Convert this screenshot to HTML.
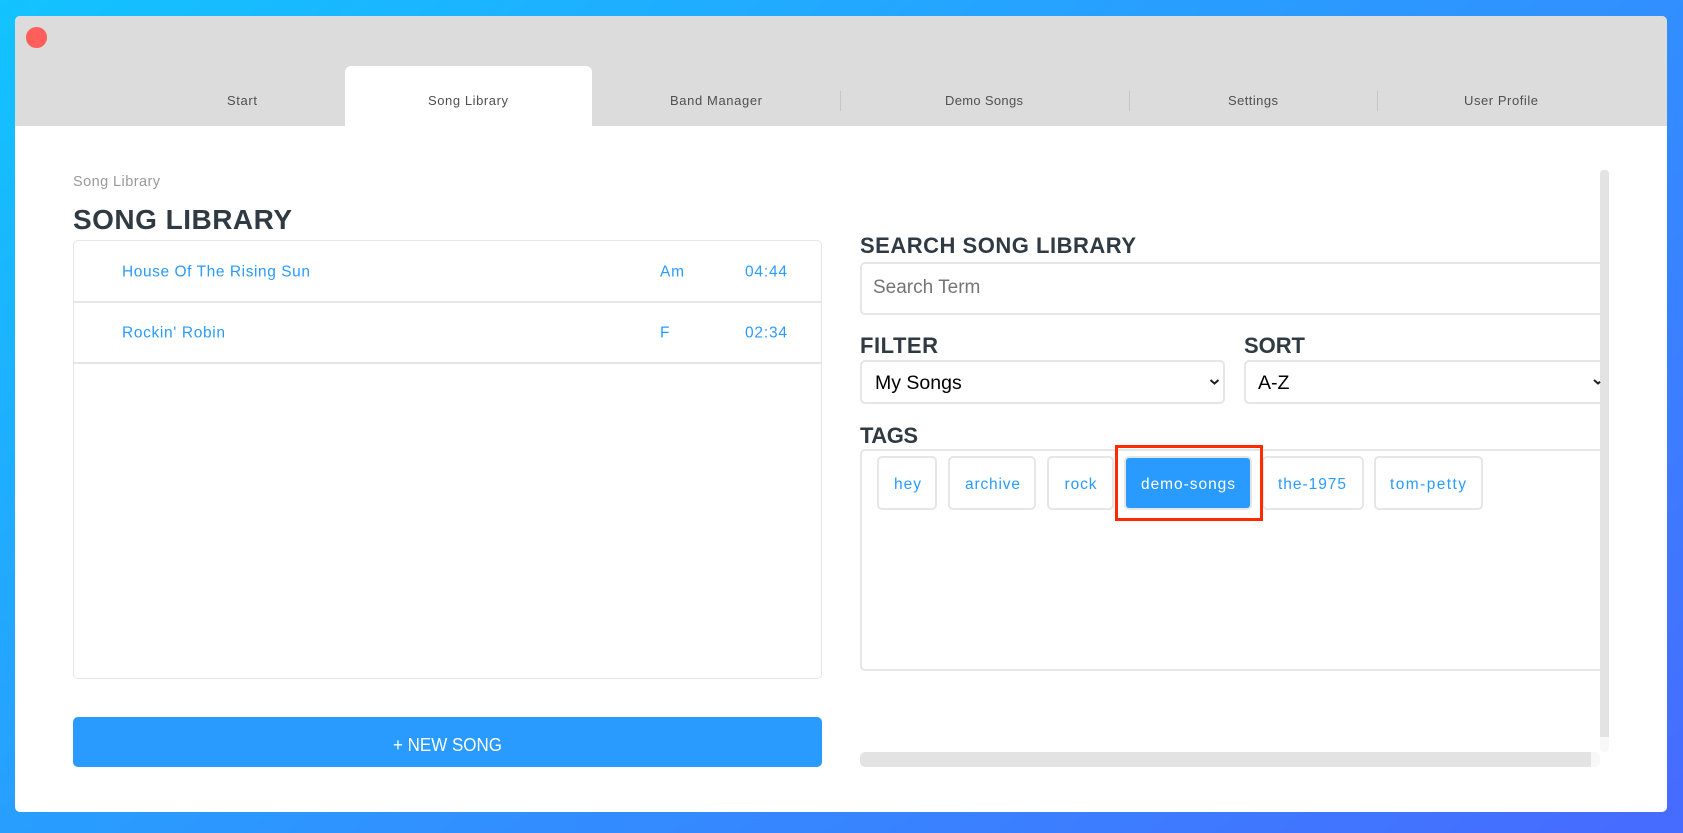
<!DOCTYPE html>
<html lang="en"><head><meta charset="utf-8"><title>Song Library</title>
<style>
html,body{margin:0;padding:0;width:1683px;height:833px;overflow:hidden}
body{position:relative;background:linear-gradient(145deg,#12c3ff 0%,#476aff 100%);font-family:"Liberation Sans",sans-serif}
.a{position:absolute;box-sizing:border-box}
#win{left:15px;top:16px;width:1652px;height:796px;background:#fff;border-radius:5px;overflow:hidden}
#bar{left:15px;top:16px;width:1652px;height:110px;background:#dcdcdc;border-radius:5px 5px 0 0}
#close{left:26px;top:27px;width:20.5px;height:20.5px;border-radius:50%;background:#ff5f5a}
#tab{left:345px;top:66px;width:247px;height:60px;background:#fff;border-radius:6px 6px 0 0}
.sep{top:91px;width:1px;height:20px;background:#c6c6c6}
.b{border:2px solid #e6e6e6;border-radius:5px;background:#fff}
#list{left:73px;top:240px;width:749px;height:439px;border:1px solid #e6e6e6;border-radius:5px}
.div{left:74px;width:747px;height:2px;background:#e6e6e6}
#new{left:73px;top:717px;width:749px;height:50px;background:#299bff;border-radius:5px}
#clip{left:850px;top:240px;width:750px;height:460px;overflow:hidden}
#clip input,#clip select{position:absolute;box-sizing:border-box;border:2px solid #e6e6e6;border-radius:5px;background:#fff;font-family:"Liberation Sans",sans-serif;outline:none;margin:0}
#clip input{left:10px;top:22px;width:748px;height:53px;padding:0 0 1px 11px;font-size:19px}
#clip input::placeholder{color:#757575;opacity:1}
#clip select{top:120px;height:44px;font-size:19.5px;color:#000;padding:2px 0 0 13px;appearance:none;-webkit-appearance:none}
.tag{top:456px;height:54px}
#sv{left:1600px;top:170px;width:9px;height:582px;background:#f8f8f8;border-radius:4px}
#st{left:1600px;top:170px;width:9px;height:567px;background:#e3e3e3;border-radius:4px 4px 0 0}
#hv{left:860px;top:752px;width:740px;height:15px;background:#f8f8f8;border-radius:5px}
#ht{left:860px;top:752px;width:731px;height:15px;background:#e3e3e3;border-radius:5px 0 0 5px}
#red{left:1115px;top:445px;width:148px;height:76px;border:3px solid #ff2a00}
svg{position:absolute;left:0;top:0}
</style></head><body>
<div class="a" id="win"></div>
<div class="a" id="bar"></div>
<div class="a" id="close"></div>
<div class="a" id="tab"></div>
<div class="a sep" style="left:840px"></div>
<div class="a sep" style="left:1129px"></div>
<div class="a sep" style="left:1377px"></div>
<div class="a" id="list"></div>
<div class="a div" style="top:301px"></div>
<div class="a div" style="top:362px"></div>
<div class="a" id="new"></div>
<div class="a" id="clip">
<input type="text" placeholder="Search Term">
<select style="left:10px;width:365px"><option>My Songs</option></select>
<select style="left:394px;width:364px;padding-left:12px"><option>A-Z</option></select>
<div class="a b" style="left:10px;top:209px;width:748px;height:222px"></div>
</div>
<div class="a" id="sv"></div><div class="a" id="st"></div>
<div class="a" id="hv"></div><div class="a" id="ht"></div>
<div class="a b tag" style="left:877px;width:60px"></div>
<div class="a b tag" style="left:948px;width:88px"></div>
<div class="a b tag" style="left:1047px;width:67px"></div>
<div class="a b tag" style="left:1124px;width:128px"></div>
<div class="a tag" style="left:1126px;top:458px;width:124px;height:50px;background:#299bff;border-radius:3px"></div>
<div class="a b tag" style="left:1262px;width:102px"></div>
<div class="a b tag" style="left:1374px;width:109px"></div>
<div class="a" id="red"></div>
<svg width="1683" height="833" viewBox="0 0 1683 833" font-family="'Liberation Sans',sans-serif">
<g font-size="13" fill="#505050">
<text x="227" y="105" textLength="30">Start</text>
<text x="428" y="105" textLength="80">Song Library</text>
<text x="670" y="105" textLength="92">Band Manager</text>
<text x="945" y="105" textLength="78">Demo Songs</text>
<text x="1228" y="105" textLength="50">Settings</text>
<text x="1464" y="105" textLength="74">User Profile</text>
</g>
<text x="73" y="186" font-size="14.5" fill="#999" textLength="87">Song Library</text>
<g font-weight="700" fill="#2f3a42">
<text x="73" y="229" font-size="28" textLength="219">SONG LIBRARY</text>
<text x="860" y="253" font-size="22" textLength="276">SEARCH SONG LIBRARY</text>
<text x="860" y="353" font-size="22" textLength="78">FILTER</text>
<text x="1244" y="353" font-size="22" textLength="61">SORT</text>
<text x="860" y="443" font-size="22" textLength="58">TAGS</text>
</g>
<g font-size="15.5" fill="#2a9bff">
<text x="122" y="276.5" textLength="188">House Of The Rising Sun</text>
<text x="660" y="276.5" textLength="24">Am</text>
<text x="745" y="276.5" textLength="42">04:44</text>
<text x="122" y="337.5" textLength="103">Rockin' Robin</text>
<text x="660" y="337.5">F</text>
<text x="745" y="337.5" textLength="42">02:34</text>
<text x="894" y="489" textLength="27">hey</text>
<text x="965" y="489" textLength="55">archive</text>
<text x="1064.5" y="489" textLength="32">rock</text>
<text x="1278" y="489" textLength="68">the-1975</text>
<text x="1390" y="489" textLength="76">tom-petty</text>
</g>
<text x="1141" y="489" font-size="15.5" fill="#fff" textLength="94">demo-songs</text>
<text x="393" y="751" font-size="18" fill="#fff" textLength="109" lengthAdjust="spacingAndGlyphs">+ NEW SONG</text>
<path d="M1210.5 380l4 3.5 4-3.5" fill="none" stroke="#222" stroke-width="2"/>
<path d="M1594 380l4 3.5 2-1.8" fill="none" stroke="#222" stroke-width="2"/>
</svg>
</body></html>
